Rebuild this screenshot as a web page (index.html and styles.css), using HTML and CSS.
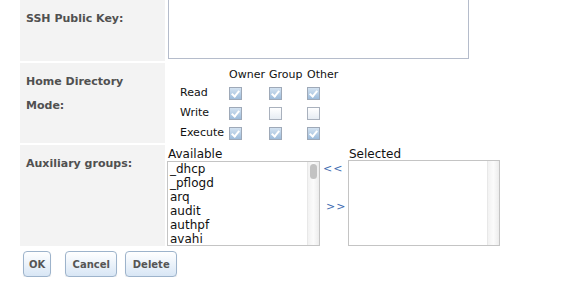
FILE: index.html
```html
<!DOCTYPE html>
<html lang="en">
<head>
    <meta charset="UTF-8">
    <meta name="viewport" content="width=device-width, initial-scale=1.0">
    <title>Edit User</title>
    <link rel="stylesheet" href="styles.css">
</head>
<body>
    <div class="page">
        <table class="form-table">
            <tr class="row-ssh">
                <td class="label">SSH Public Key:</td>
                <td class="field"><textarea class="ssh-key"></textarea></td>
            </tr>
            <tr class="row-mode">
                <td class="label">Home Directory<br>Mode:</td>
                <td class="field">
                    <div class="perms">
                        <span></span>
                        <span class="head">Owner</span>
                        <span class="head">Group</span>
                        <span class="head">Other</span>

                        <span class="name">Read</span>
                        <span class="cell"><input type="checkbox" checked></span>
                        <span class="cell"><input type="checkbox" checked></span>
                        <span class="cell"><input type="checkbox" checked></span>

                        <span class="name">Write</span>
                        <span class="cell"><input type="checkbox" checked></span>
                        <span class="cell"><input type="checkbox"></span>
                        <span class="cell"><input type="checkbox"></span>

                        <span class="name">Execute</span>
                        <span class="cell"><input type="checkbox" checked></span>
                        <span class="cell"><input type="checkbox" checked></span>
                        <span class="cell"><input type="checkbox" checked></span>
                    </div>
                </td>
            </tr>
            <tr class="row-groups">
                <td class="label">Auxiliary groups:</td>
                <td class="field">
                    <div class="picker">
                        <div class="pick-col">
                            <div class="list-title">Available</div>
                            <div class="listbox available">
                                <ul>
                                    <li>_dhcp</li>
                                    <li>_pflogd</li>
                                    <li>arq</li>
                                    <li>audit</li>
                                    <li>authpf</li>
                                    <li>avahi</li>
                                </ul>
                                <div class="scrollbar"><div class="thumb"></div></div>
                            </div>
                        </div>
                        <div class="arrows">
                            <a href="#" class="arrow-left">&lt;&lt;</a>
                            <a href="#" class="arrow-right">&gt;&gt;</a>
                        </div>
                        <div class="pick-col">
                            <div class="list-title">Selected</div>
                            <div class="listbox selected">
                                <ul></ul>
                                <div class="scrollbar"></div>
                            </div>
                        </div>
                    </div>
                </td>
            </tr>
        </table>

        <div class="buttons">
            <button class="btn btn-ok">OK</button>
            <button class="btn">Cancel</button>
            <button class="btn">Delete</button>
        </div>
    </div>
</body>
</html>
```

FILE: styles.css
```css
body {
    margin: 0;
    font-family: "DejaVu Sans", Verdana, sans-serif;
    font-size: 11px;
    color: #111;
    background: #fff;
}
.page {
    padding-left: 20px;
    margin-top: -2px;
}
.form-table {
    border-collapse: separate;
    border-spacing: 0 2px;
}
.form-table td {
    vertical-align: top;
    padding: 0;
}
.label {
    width: 139px;
    background: #f3f3f3;
    color: #505050;
    font-weight: bold;
    font-size: 11px;
    line-height: 24px;
    padding: 7px 0 0 6px !important;
}
.field {
    padding-left: 2px !important;
    padding-right: 2px !important;
}
.row-ssh .label {
    height: 54px;
}
.ssh-key {
    display: block;
    box-sizing: border-box;
    width: 301px;
    height: 60px;
    margin: -1px 0 2px 1px;
    border: 1px solid #b5bccb;
    resize: none;
    padding: 2px;
}

/* permissions grid */
.row-mode .label {
    height: 73px;
}
.perms {
    display: grid;
    grid-template-columns: 49px 40px 38px 40px;
    grid-auto-rows: 20px;
    grid-template-rows: 16px;
    margin: 4px 0 0 13px;
    font-size: 11px;
    color: #111;
}
.perms .head {
    line-height: 16px;
}
.perms .name {
    line-height: 20px;
}
.perms .cell {
    display: flex;
    align-items: center;
}
.perms input {
    -webkit-appearance: none;
    appearance: none;
    position: relative;
    margin: 0;
    width: 13px;
    height: 13px;
    box-sizing: border-box;
    border: 1px solid #a9b1bd;
    background: linear-gradient(#ffffff, #e6ecf3);
}
.perms input:checked {
    border-color: #9ea9b8;
    background: linear-gradient(#d3e2f1, #9dbcdb);
}
.perms input:checked::after {
    content: "";
    position: absolute;
    left: 3px;
    top: 1px;
    width: 3px;
    height: 6px;
    border: solid #fff;
    border-width: 0 2px 2px 0;
    transform: rotate(40deg);
}

/* group picker */
.row-groups .label {
    height: 94px;
}
.picker {
    display: flex;
    margin-top: 2px;
}
.list-title {
    font-size: 12px;
    line-height: 14px;
    color: #111;
    padding-left: 1px;
}
.listbox {
    display: flex;
    box-sizing: border-box;
    height: 85px;
    border: 1px solid #c4c4c4;
    background: #fff;
    overflow: hidden;
}
.listbox.available {
    width: 153px;
}
.listbox.selected {
    width: 152px;
    height: 86px;
    margin-top: -1px;
}
.listbox ul {
    flex: 1;
    list-style: none;
    margin: 0;
    padding: 0 2px;
    font-size: 12px;
    line-height: 14px;
    color: #111;
}
.scrollbar {
    width: 11px;
    border-left: 1px solid #e8e8e8;
    background: linear-gradient(to right, #f2f2f2, #fbfbfb 50%, #ececec);
}
.thumb {
    margin: 2px 2px 0 2px;
    height: 15px;
    border-radius: 4px;
    background: #c2c2c2;
}
.arrows {
    width: 28px;
}
.arrows a {
    display: block;
    color: #3d6bb0;
    text-decoration: none;
    font-size: 11px;
    letter-spacing: 1px;
}
.arrow-left {
    margin: 15px 0 0 3px;
}
.arrow-right {
    margin: 25px 0 0 6px;
}

/* buttons */
.buttons {
    display: flex;
    gap: 8px;
    margin: 3px 0 0 3px;
}
.btn {
    height: 26px;
    min-width: 52px;
    padding: 0 5px;
    border: 1px solid #9db3cb;
    border-radius: 4px;
    background: linear-gradient(#ffffff, #d8e6f5);
    box-shadow: 0 1px 1px rgba(0,0,0,0.1);
    font-family: "DejaVu Sans", Verdana, sans-serif;
    font-size: 10px;
    font-weight: bold;
    color: #555;
    cursor: pointer;
}
.btn-ok {
    min-width: 0;
    margin-right: 6px;
}
```
